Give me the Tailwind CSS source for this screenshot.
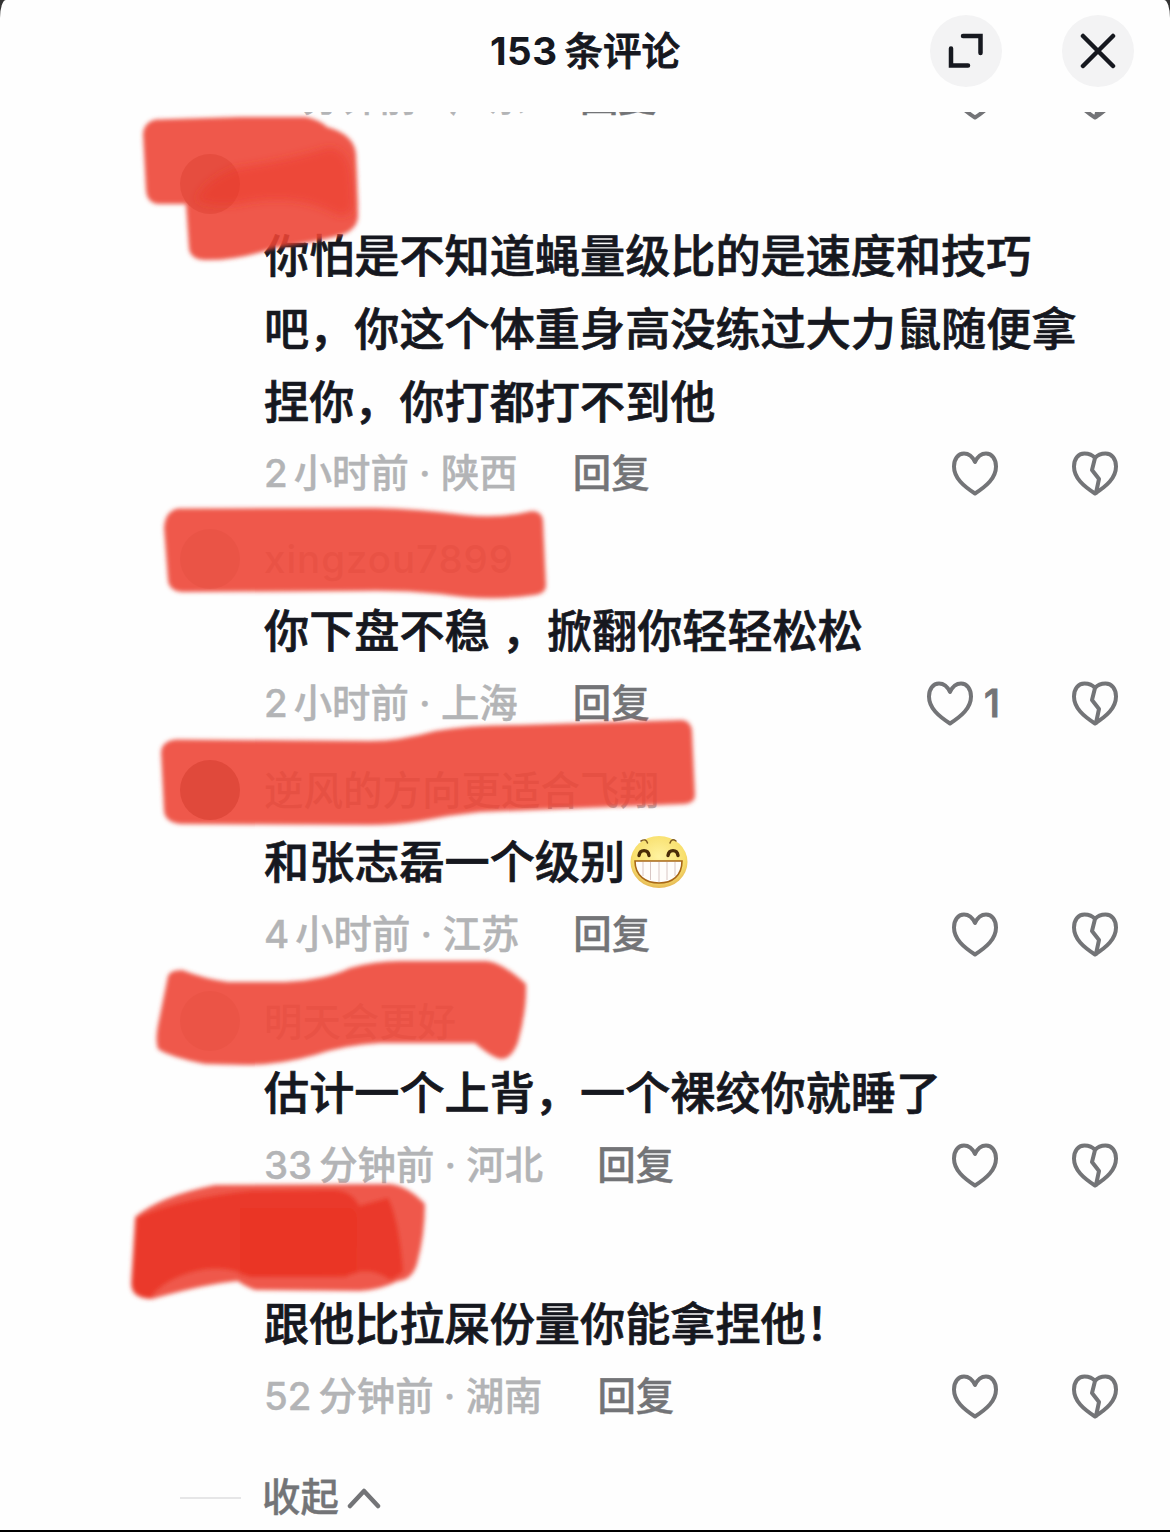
<!DOCTYPE html>
<html lang="zh-CN">
<head>
    <meta charset="UTF-8">
    <meta name="viewport" content="width=device-width, initial-scale=1.0">
    <title>153条评论</title>
    <script src="https://cdn.jsdelivr.net/npm/@tailwindcss/browser@4"></script>
</head>
<body class="bg-[#333333] font-['Inter','Noto_Sans_CJK_SC',sans-serif]">
    <!-- Shared icons -->
    <svg class="hidden">
        <symbol id="heart" viewBox="0 0 48 46" fill="none" stroke="#737477" stroke-width="4" stroke-linejoin="round" stroke-linecap="round">
            <path d="M24 11C21.500 5.500 17.500 2.500 13 2.500C7 2.500 3 8 3 15.500C3 27 12.500 35 24 42.500C35.500 35 45 27 45 15.500C45 8 41 2.500 35 2.500C30.500 2.500 26.500 5.500 24 11Z"/>
        </symbol>
        <symbol id="broken" viewBox="0 0 48 46" fill="none" stroke="#737477" stroke-width="4" stroke-linejoin="round" stroke-linecap="round">
            <path d="M24 7C21.500 4 17.500 2.500 13.500 2.500C7 2.500 3 8 3 15.500C3 27 12.500 35 24 42.500C35.500 35 45 27 45 15.500C45 8 41 2.500 34.500 2.500C30.500 2.500 26.500 4 24 7L21 19L28 28L25 42"/>
        </symbol>
    </svg>

    <div class="relative flex h-[1532px] w-[1170px] flex-col overflow-hidden border-b-2 border-black bg-[#fefefe] [border-radius:6px_6px_0_0/18px_18px_0_0]">
        <!-- Header -->
        <header class="grid h-[112px] shrink-0 grid-cols-[1fr_auto_1fr] items-start pt-[15px]">
            <span></span>
            <h1 class="flex h-[74px] items-center gap-[7px] text-[38.5px] font-bold text-[#16181f]">
                <span class="tracking-[0.5px]">153</span><span class="font-medium [-webkit-text-stroke:0.9px_#16181f]">条评论</span>
            </h1>
            <div class="flex justify-end gap-[60px] pr-[36px]">
                <button class="flex size-[72px] items-center justify-center rounded-full bg-[#f3f3f4]">
                    <svg class="size-[36px]" viewBox="0 0 36 36" fill="none" stroke="#16181f" stroke-width="4.500" stroke-linecap="round" stroke-linejoin="miter"><path d="M15 3H32.500V20M3 15.500V32.500H20"/></svg>
                </button>
                <button class="flex size-[72px] items-center justify-center rounded-full bg-[#f3f3f4]">
                    <svg class="size-[36px]" viewBox="0 0 36 36" fill="none" stroke="#16181f" stroke-width="4.500" stroke-linecap="round"><path d="M3 3L33 33M33 3L3 33"/></svg>
                </button>
            </div>
        </header>

        <!-- Comment list -->
        <main class="flex-1 overflow-hidden pl-[264px] text-[45.15px] font-medium leading-[73px] text-[#16181f]">
            <div class="-mt-[50px] flex h-[71px] items-center pr-[51px] text-[38.4px] text-[#b3b4b6] [-webkit-text-stroke:0.4px]">
                <span>11</span><span class="ml-[6px]">分钟前 · 广东</span><span class="ml-[54px] text-[#737477]">回复</span>
                <svg class="ml-auto h-[46px] w-[48px]"><use href="#heart"/></svg>
                <svg class="ml-[72px] h-[46px] w-[48px]"><use href="#broken"/></svg>
            </div>

            <article>
                <div class="relative h-[87px]">
                    <div class="absolute -left-[84px] top-[21px] size-[60px] rounded-full bg-[#aa9a92]"></div>
                </div>
                <p class="w-[830px] [-webkit-text-stroke:0.7px]">你怕是不知道蝇量级比的是速度和技巧<br>吧，你这个体重身高没练过大力鼠随便拿<br>捏你，你打都打不到他</p>
                <div class="flex h-[69px] items-center pr-[51px] text-[38.4px] text-[#b3b4b6] [-webkit-text-stroke:0.4px]">
                    <span>2</span><span class="ml-[6px]">小时前 · 陕西</span><span class="ml-[55px] text-[#737477]">回复</span>
                    <svg class="ml-auto h-[46px] w-[48px]"><use href="#heart"/></svg>
                    <svg class="ml-[72px] h-[46px] w-[48px]"><use href="#broken"/></svg>
                </div>
            </article>

            <article>
                <div class="relative h-[87px] pt-[16px] text-[38.4px] leading-[70px] tracking-[1px] text-[#c6c6c8]">
                    <div class="absolute -left-[84px] top-[21px] size-[60px] rounded-full bg-[#d4d4d6]"></div>
                    xingzou7899
                </div>
                <p class="[-webkit-text-stroke:0.7px]">你下盘不稳 ，掀翻你轻轻松松</p>
                <div class="flex h-[71px] items-center pr-[51px] text-[38.4px] text-[#b3b4b6] [-webkit-text-stroke:0.4px]">
                    <span>2</span><span class="ml-[6px]">小时前 · 上海</span><span class="ml-[55px] text-[#737477]">回复</span>
                    <svg class="ml-auto h-[46px] w-[48px]"><use href="#heart"/></svg>
                    <span class="ml-[10px] w-[16px] text-[#737477] [-webkit-text-stroke:1px]">1</span>
                    <svg class="ml-[71px] h-[46px] w-[48px]"><use href="#broken"/></svg>
                </div>
            </article>

            <article>
                <div class="relative h-[87px] pt-[16px] text-[39.5px] leading-[72px] text-[#b2b2b5]">
                    <div class="absolute -left-[84px] top-[21px] size-[60px] rounded-full bg-[#77706d]"></div>
                    逆风的方向更适合飞翔
                </div>
                <p class="flex items-center [-webkit-text-stroke:0.7px]">和张志磊一个级别
                    <svg class="ml-[4px] h-[56px] w-[60px]" viewBox="0 0 60 56">
                        <defs>
                            <radialGradient id="face" cx=".5" cy=".4" r=".65"><stop offset="0" stop-color="#fff3a0"/><stop offset=".7" stop-color="#f8df6c"/><stop offset="1" stop-color="#dfaa4c"/></radialGradient>
                        </defs>
                        <ellipse cx="30" cy="27" rx="28.500" ry="26" fill="url(#face)"/>
                        <path d="M6 26H53C53 41 43 48 30 48S6 41 6 26Z" fill="#fffdfb" stroke="#a86718" stroke-width="1.600"/>
                        <path d="M14 27V41M21.500 27V45M30 27V47M38 27V45M46 27V41" stroke="#d9c7c4" stroke-width="1"/>
                        <path d="M10 20.500C11 14 19 14 20 20.500M39 20.500C40 14 48 14 49 20.500" fill="none" stroke="#4a2c08" stroke-width="3.400" stroke-linecap="round"/>
                        <path d="M12 6Q17 3 18.500 8M41 8Q42.500 3 47 6" fill="none" stroke="#7d5a20" stroke-width="1.500" stroke-linecap="round"/>
                    </svg>
                </p>
                <div class="flex h-[71px] items-center pr-[51px] text-[38.4px] text-[#b3b4b6] [-webkit-text-stroke:0.4px]">
                    <span>4</span><span class="ml-[6px]">小时前 · 江苏</span><span class="ml-[54px] text-[#737477]">回复</span>
                    <svg class="ml-auto h-[46px] w-[48px]"><use href="#heart"/></svg>
                    <svg class="ml-[72px] h-[46px] w-[48px]"><use href="#broken"/></svg>
                </div>
            </article>

            <article>
                <div class="relative h-[87px] pt-[16px] text-[38.4px] leading-[72px] text-[#c6c6c8]">
                    <div class="absolute -left-[84px] top-[21px] size-[60px] rounded-full bg-[#dcd7d4]"></div>
                    明天会更好
                </div>
                <p class="[-webkit-text-stroke:0.7px]">估计一个上背，一个裸绞你就睡了</p>
                <div class="flex h-[71px] items-center pr-[51px] text-[38.4px] text-[#b3b4b6] [-webkit-text-stroke:0.4px]">
                    <span>33</span><span class="ml-[7px]">分钟前 · 河北</span><span class="ml-[54px] text-[#737477]">回复</span>
                    <svg class="ml-auto h-[46px] w-[48px]"><use href="#heart"/></svg>
                    <svg class="ml-[72px] h-[46px] w-[48px]"><use href="#broken"/></svg>
                </div>
            </article>

            <article>
                <div class="h-[87px]"></div>
                <p class="[-webkit-text-stroke:0.7px]">跟他比拉屎份量你能拿捏他！</p>
                <div class="flex h-[71px] items-center pr-[51px] text-[38.4px] text-[#b3b4b6] [-webkit-text-stroke:0.4px]">
                    <span>52</span><span class="ml-[7px]">分钟前 · 湖南</span><span class="ml-[55px] text-[#737477]">回复</span>
                    <svg class="ml-auto h-[46px] w-[48px]"><use href="#heart"/></svg>
                    <svg class="ml-[72px] h-[46px] w-[48px]"><use href="#broken"/></svg>
                </div>
            </article>

            <!-- Collapse replies -->
            <div class="-ml-[84px] mt-[30px] flex h-[71px] items-center text-[38.4px] text-[#737477] [-webkit-text-stroke:0.4px]">
                <span class="h-[2px] w-[61px] bg-[#e6e6e7]"></span>
                <span class="ml-[21px]">收起</span>
                <svg class="ml-[8px] h-[22px] w-[34px]" viewBox="0 0 34 22" fill="none" stroke="#737477" stroke-width="4.500" stroke-linecap="round" stroke-linejoin="round"><path d="M3 19L17 4L31 19"/></svg>
            </div>
        </main>

        <!-- Marker strokes over the names -->
        <svg class="pointer-events-none absolute left-0 top-0" width="1170" height="1532" viewBox="0 0 1170 1532" fill="#ed4334" fill-opacity=".89">
            <filter id="soft" x="-5%" y="-10%" width="110%" height="120%"><feGaussianBlur stdDeviation="1.900"/></filter>
            <filter id="softer" x="-5%" y="-10%" width="110%" height="120%"><feGaussianBlur stdDeviation="4"/></filter>
            <g filter="url(#soft)">
                <path d="M143 134Q144 122 156 119.500L240 117H306Q320 120 327 127Q354 134 356 154L358 218Q356 230 342 235Q310 243 275 248Q235 261 204 260Q190 259 189 248L186 204L158 204Q147 203 146 190Z"/>
                <path d="M164 528Q165 511 178 508.500L375 508Q420 509 465 515Q500 519 532 511Q542 511 543 521L546 586Q545 594 535 595Q490 602 440 594Q400 590 360 591L182 592Q169 591 168 580Z"/>
                <path d="M161 752Q162 741 176 739.500L370 741Q400 741 435 731Q470 725 520 725L682 720Q691 721 692 731L695 795Q695 803 685 804L480 812Q450 815 420 821Q395 825 370 825L180 824Q165 822 164 811Z"/>
                <path d="M168 976Q170 970 182 970Q205 979 228 982L285 982Q325 980 350 968Q375 961 400 961L485 961Q500 961 526 984Q527 1010 518 1042Q512 1058 502 1059Q492 1058 475 1043L380 1043Q345 1045 315 1055Q280 1065 245 1065L205 1064Q170 1057 158 1049Q155 1040 158 1025Z"/>
                <path d="M135 1217Q160 1196 215 1185L390 1184Q408 1186 425 1204Q425 1235 417 1264Q412 1280 398 1281Q380 1290 360 1291L255 1290Q242 1285 238 1281Q205 1284 152 1299Q130 1299 131 1282Z"/>
                <path d="M137 1218Q180 1198 250 1191L335 1190Q353 1192 359 1206L388 1198Q399 1220 403 1272L391 1280Q368 1264 345 1277L250 1277Q225 1264 196 1271Q165 1278 150 1298Q132 1296 133 1282Z" fill="#ea3222" fill-opacity=".8"/>
                <path d="M240 1208L350 1208Q357 1210 357 1222L356 1274L240 1276Z" fill="#e93021" fill-opacity=".3"/>
            </g>
            <g filter="url(#softer)" fill="#ea3424">
                <path d="M235 168Q290 160 330 147Q350 150 352 178L354 207Q347 220 335 214Q300 194 250 202Q218 210 196 200Q205 180 235 168Z" fill-opacity=".45"/>
            </g>
        </svg>
    </div>
</body>
</html>
